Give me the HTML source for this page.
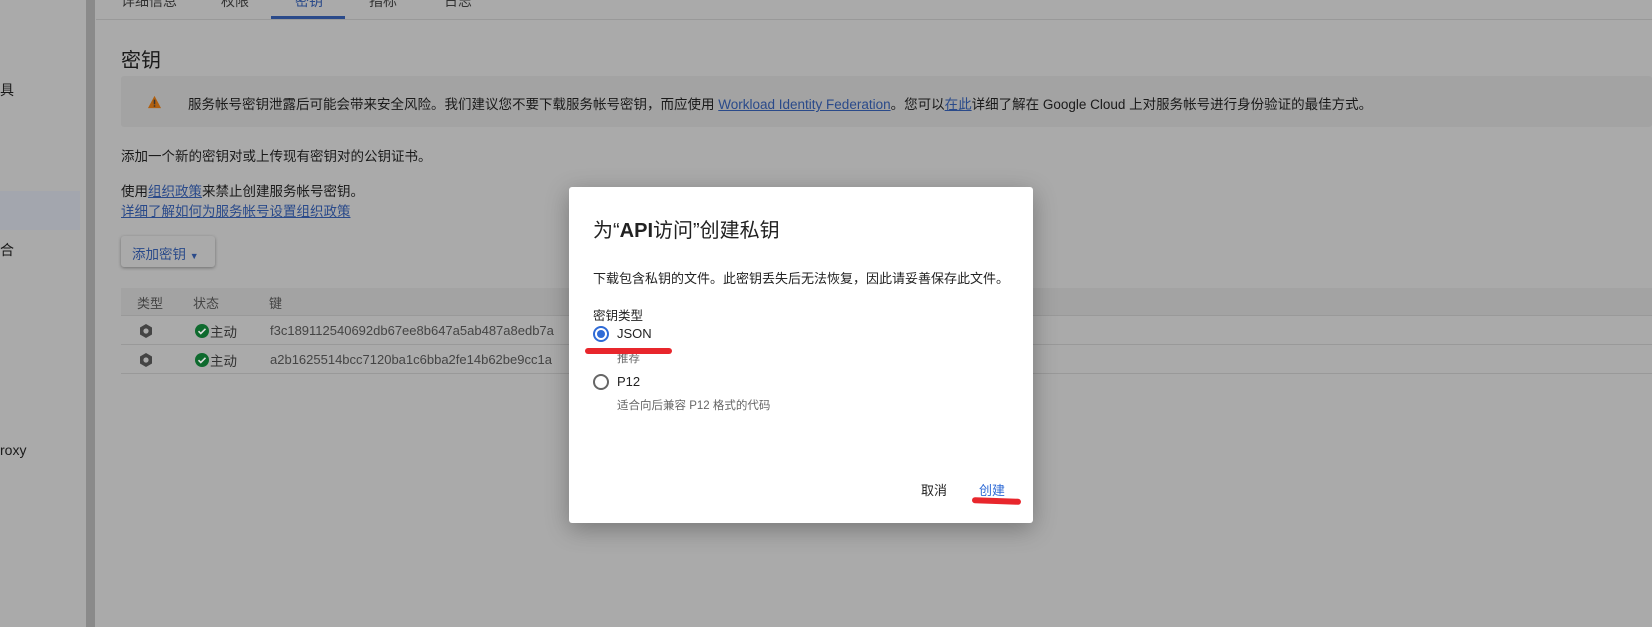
<!DOCTYPE html>
<html><head><meta charset="utf-8"><style>
*{margin:0;padding:0;box-sizing:border-box}
body{width:1652px;height:627px;overflow:hidden;background:#aaa;font-family:"Liberation Sans","Noto Sans CJK SC",sans-serif;color:#1a1a1a;position:relative}
.a{position:absolute;white-space:nowrap}
.lnk{color:#2a4a8a;text-decoration:underline}
</style></head><body>
<div class="a" style="left:0;top:191px;width:80px;height:39px;background:#a3a6ae"></div>
<div class="a" style="left:0;top:80px;font-size:14px">具</div>
<div class="a" style="left:0;top:240px;font-size:14px">合</div>
<div class="a" style="left:0;top:442px;font-size:14px">roxy</div>
<div class="a" style="left:86px;top:0;width:9px;height:627px;background:#8a8a8a"></div>
<div class="a" style="left:96px;top:19px;width:1556px;height:1px;background:#999"></div>
<div class="a" style="left:121px;top:-9px;font-size:14px;color:#333">详细信息</div>
<div class="a" style="left:221px;top:-9px;font-size:14px;color:#333">权限</div>
<div class="a" style="left:295px;top:-9px;font-size:14px;color:#2a4a8a">密钥</div>
<div class="a" style="left:369px;top:-9px;font-size:14px;color:#333">指标</div>
<div class="a" style="left:444px;top:-9px;font-size:14px;color:#333">日志</div>
<div class="a" style="left:271px;top:16px;width:74px;height:3px;background:#2a4a8a"></div>
<div class="a" style="left:121px;top:44px;font-size:20px">密钥</div>
<div class="a" style="left:121px;top:76px;width:1531px;height:51px;background:#a3a3a3;border-radius:3px"></div>
<svg class="a" style="left:147px;top:95px" width="15" height="14" viewBox="0 0 16 15"><path d="M8 1L15 14H1Z" fill="#b06010"/><rect x="7.2" y="5" width="1.6" height="5" fill="#333"/><rect x="7.2" y="11" width="1.6" height="1.6" fill="#333"/></svg>
<div class="a" style="left:188px;top:93px;font-size:13.5px">服务帐号密钥泄露后可能会带来安全风险。我们建议您不要下载服务帐号密钥，而应使用 <span class="lnk">Workload Identity Federation</span>。您可以<span class="lnk">在此</span>详细了解在 Google Cloud 上对服务帐号进行身份验证的最佳方式。</div>
<div class="a" style="left:121px;top:145px;font-size:13.5px">添加一个新的密钥对或上传现有密钥对的公钥证书。</div>
<div class="a" style="left:121px;top:180px;font-size:13.5px">使用<span class="lnk">组织政策</span>来禁止创建服务帐号密钥。</div>
<div class="a" style="left:121px;top:200px;font-size:13.5px"><span class="lnk">详细了解如何为服务帐号设置组织政策</span></div>
<div class="a" style="left:121px;top:236px;width:94px;height:31px;background:#aaa;box-shadow:0 1px 3px rgba(0,0,0,.35);border-radius:3px;font-size:13.5px;color:#2a4a8a;padding:7px 0 0 11px">添加密钥 <span style="font-size:9px">▼</span></div>
<div class="a" style="left:121px;top:288px;width:1531px;height:28px;background:#a3a3a3;border-bottom:1px solid #999"></div>
<div class="a" style="left:137px;top:293px;font-size:13px;color:#444">类型</div>
<div class="a" style="left:193px;top:293px;font-size:13px;color:#444">状态</div>
<div class="a" style="left:269px;top:293px;font-size:13px;color:#444">键</div>
<div class="a" style="left:121px;top:344px;width:1531px;height:1px;background:#999"></div>
<div class="a" style="left:121px;top:373px;width:1531px;height:1px;background:#999"></div>
<svg class="a" style="left:138px;top:323px" width="16" height="16" viewBox="0 0 16 16"><path d="M8 1L14 4.5V11.5L8 15L2 11.5V4.5Z" fill="#444"/><circle cx="8" cy="8" r="2.6" fill="#aaa"/></svg>
<svg class="a" style="left:138px;top:352px" width="16" height="16" viewBox="0 0 16 16"><path d="M8 1L14 4.5V11.5L8 15L2 11.5V4.5Z" fill="#444"/><circle cx="8" cy="8" r="2.6" fill="#aaa"/></svg>
<svg class="a" style="left:195px;top:324px" width="14" height="14" viewBox="0 0 14 14"><circle cx="7" cy="7" r="7" fill="#0e6a2e"/><path d="M3.5 7.2l2.3 2.3 4.7-4.7" stroke="#ddd" stroke-width="1.6" fill="none"/></svg>
<svg class="a" style="left:195px;top:353px" width="14" height="14" viewBox="0 0 14 14"><circle cx="7" cy="7" r="7" fill="#0e6a2e"/><path d="M3.5 7.2l2.3 2.3 4.7-4.7" stroke="#ddd" stroke-width="1.6" fill="none"/></svg>
<div class="a" style="left:210px;top:321px;font-size:13.5px;color:#333">主动</div>
<div class="a" style="left:210px;top:350px;font-size:13.5px;color:#333">主动</div>
<div class="a" style="left:270px;top:323px;font-size:13px;color:#444">f3c189112540692db67ee8b647a5ab487a8edb7a</div>
<div class="a" style="left:270px;top:352px;font-size:13px;color:#444">a2b1625514bcc7120ba1c6bba2fe14b62be9cc1a</div>

<div class="a" style="left:569px;top:187px;width:464px;height:336px;background:#fff;border-radius:3px;box-shadow:0 6px 24px rgba(0,0,0,.3)"></div>
<div class="a" style="left:593px;top:214px;font-size:20px;color:#222">为“<b>API</b>访问”创建私钥</div>
<div class="a" style="left:593px;top:268px;font-size:13px;color:#222">下载包含私钥的文件。此密钥丢失后无法恢复，因此请妥善保存此文件。</div>
<div class="a" style="left:593px;top:305px;font-size:12.5px;color:#222">密钥类型</div>
<div class="a" style="left:593px;top:326px;width:16px;height:16px;border:2px solid #2f6bd6;border-radius:50%"></div>
<div class="a" style="left:597px;top:330px;width:8px;height:8px;background:#2f6bd6;border-radius:50%"></div>
<div class="a" style="left:617px;top:326px;font-size:13px;color:#222">JSON</div>
<div class="a" style="left:617px;top:350px;font-size:11.5px;color:#666">推荐</div>
<div class="a" style="left:585px;top:348px;width:87px;height:6px;background:#e8262c;border-radius:3px"></div>
<div class="a" style="left:593px;top:374px;width:16px;height:16px;border:2px solid #666;border-radius:50%"></div>
<div class="a" style="left:617px;top:374px;font-size:13px;color:#222">P12</div>
<div class="a" style="left:617px;top:397px;font-size:11.5px;color:#666">适合向后兼容 P12 格式的代码</div>
<div class="a" style="left:921px;top:480px;font-size:13px;color:#222">取消</div>
<div class="a" style="left:979px;top:480px;font-size:13px;color:#2f6bd6">创建</div>
<div class="a" style="left:972px;top:498px;width:49px;height:6px;background:#e8262c;border-radius:3px;transform:rotate(2deg)"></div>
</body></html>
